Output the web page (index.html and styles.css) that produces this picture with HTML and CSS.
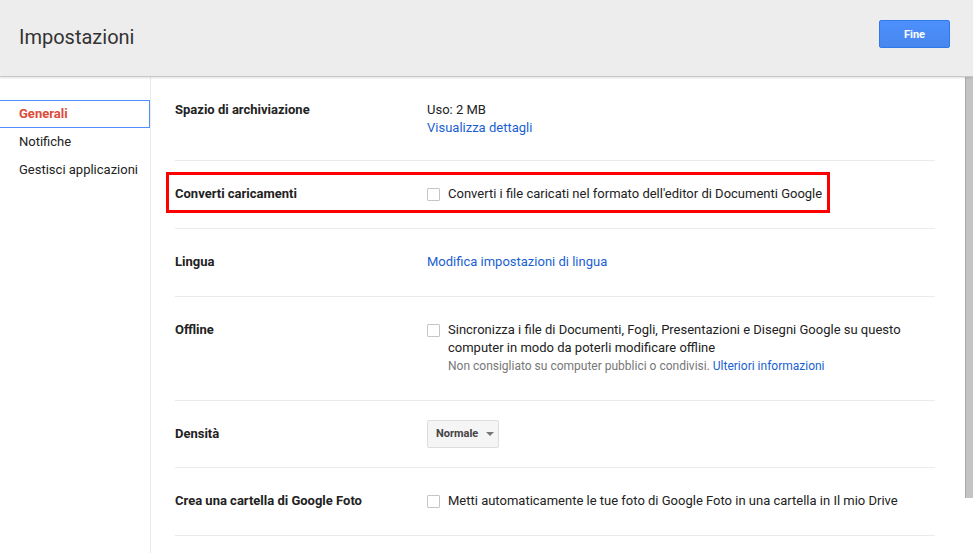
FILE: index.html
```html
<!DOCTYPE html>
<html lang="it">
<head>
<meta charset="utf-8">
<title>Impostazioni</title>
<link rel="stylesheet" href="styles.css">
</head>
<body>
<header class="topbar">
  <h1 class="title">Impostazioni</h1>
  <button class="btn-done">Fine</button>
</header>
<div class="main">
  <nav class="sidebar">
    <a class="nav-item active">Generali</a>
    <a class="nav-item">Notifiche</a>
    <a class="nav-item">Gestisci applicazioni</a>
  </nav>
  <section class="content">
    <div class="row row-first">
      <div class="label">Spazio di archiviazione</div>
      <div class="value">
        <div>Uso: 2 MB</div>
        <a class="link">Visualizza dettagli</a>
      </div>
    </div>
    <div class="row row-highlight">
      <div class="label">Converti caricamenti</div>
      <div class="value check-line">
        <span class="checkbox"></span>
        <span>Converti i file caricati nel formato dell'editor di Documenti Google</span>
      </div>
      <div class="highlight-box"></div>
    </div>
    <div class="row">
      <div class="label">Lingua</div>
      <div class="value"><a class="link">Modifica impostazioni di lingua</a></div>
    </div>
    <div class="row">
      <div class="label">Offline</div>
      <div class="value check-line">
        <span class="checkbox"></span>
        <div>
          <div>Sincronizza i file di Documenti, Fogli, Presentazioni e Disegni Google su questo<br>computer in modo da poterli modificare offline</div>
          <div class="hint">Non consigliato su computer pubblici o condivisi. <a class="link">Ulteriori informazioni</a></div>
        </div>
      </div>
    </div>
    <div class="row row-select">
      <div class="label">Densità</div>
      <div class="value">
        <div class="select">Normale <span class="arrow"></span></div>
      </div>
    </div>
    <div class="row">
      <div class="label">Crea una cartella di Google Foto</div>
      <div class="value check-line">
        <span class="checkbox"></span>
        <span>Metti automaticamente le tue foto di Google Foto in una cartella in Il mio Drive</span>
      </div>
    </div>
  </section>
</div>
<div class="scrollbar"><div class="thumb"></div></div>
</body>
</html>
```

FILE: styles.css
```css
* { box-sizing: border-box; }
html, body { height: 100%; }
body {
  margin: 0;
  font-family: Roboto, "Liberation Sans", Arial, sans-serif;
  font-size: 13px;
  color: #222;
  background: #fff;
  overflow: hidden;
  position: relative;
}
.topbar {
  height: 77px;
  background: #ededed;
  border-bottom: 1px solid #c8c8c8;
  box-shadow: 0 1px 2px rgba(0,0,0,0.12);
  display: flex;
  align-items: flex-start;
  justify-content: space-between;
  padding: 0 23px 0 19px;
  position: relative;
  z-index: 1;
}
.title {
  margin: 25px 0 0;
  font-size: 20px;
  font-weight: 400;
  color: #333;
  line-height: 24px;
}
.btn-done {
  margin-top: 20px;
  width: 71px;
  height: 28px;
  border: 1px solid #3079ed;
  border-radius: 2px;
  background: linear-gradient(#4d90fe, #4787ed);
  color: #fff;
  font-family: Roboto, "Liberation Sans", Arial, sans-serif;
  font-size: 11px;
  font-weight: 700;
  padding: 0;
}
.main {
  display: flex;
  height: calc(100% - 77px);
}
.sidebar {
  width: 151px;
  flex: none;
  border-right: 1px solid #ebebeb;
  padding-top: 23px;
  display: flex;
  flex-direction: column;
}
.nav-item {
  display: block;
  height: 28px;
  line-height: 26px;
  padding-left: 19px;
  border: 1px solid transparent;
  border-left: none;
  width: 150px;
  color: #222;
  font-size: 13px;
}
.nav-item.active {
  border-color: #4d90fe;
  color: #dd4b39;
  font-weight: 700;
}
.content {
  flex: 1;
  padding: 0 30px 0 24px;
  margin-right: 8px;
}
.row {
  display: grid;
  grid-template-columns: 252px 1fr;
  align-items: start;
  padding: 24px 0 25px;
  border-bottom: 1px solid #ebebeb;
  line-height: 18px;
  position: relative;
}
.row-first { padding-bottom: 23px; }
.row-select {
  align-items: center;
  padding: 19px 0 19px;
}
.label {
  font-weight: 700;
  color: #222;
}
.value { color: #222; }
.link {
  color: #1a5fd2;
  text-decoration: none;
}
.check-line {
  display: flex;
  align-items: flex-start;
  gap: 8px;
}
.checkbox {
  flex: none;
  width: 13px;
  height: 13px;
  margin-top: 3px;
  border: 1px solid #c6c6c6;
  border-radius: 1px;
  background: #fff;
}
.hint {
  font-size: 12px;
  color: #777;
  line-height: 18px;
}
.select {
  display: inline-flex;
  align-items: center;
  height: 28px;
  width: 72px;
  padding-left: 8px;
  border: 1px solid #dcdcdc;
  border-radius: 2px;
  background: #f5f5f5;
  color: #444;
  font-size: 11px;
  font-weight: 700;
}
.arrow {
  margin-left: 8px;
  width: 0;
  height: 0;
  border-left: 4px solid transparent;
  border-right: 4px solid transparent;
  border-top: 4px solid #777;
}
.highlight-box {
  position: absolute;
  left: -9px;
  top: 11px;
  width: 664px;
  height: 41px;
  border: 3px solid #f00;
  pointer-events: none;
}
.scrollbar {
  position: absolute;
  right: 0;
  top: 77px;
  bottom: 0;
  width: 8px;
  background: #fff;
}
.thumb {
  height: 421px;
  background: #c4c4c4;
  border-left: 1px solid #aaa;
}
```
